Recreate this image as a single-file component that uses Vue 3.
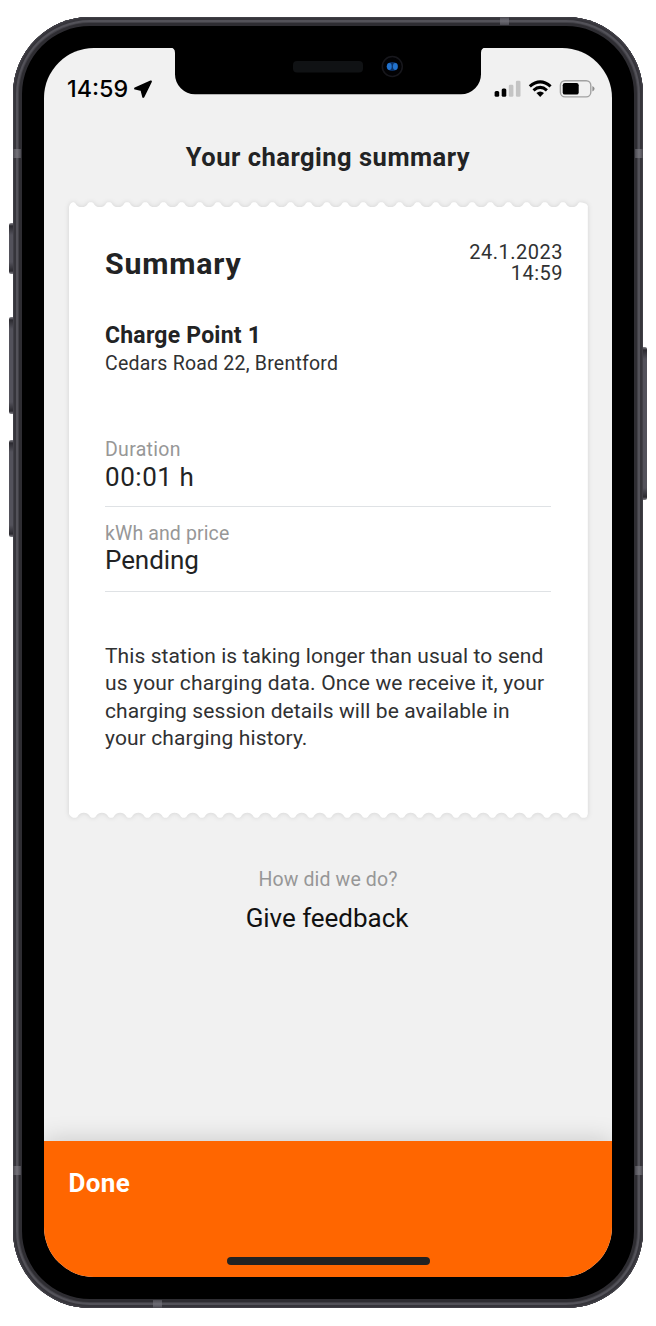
<script setup>
const session = {
  point: 'Charge Point 1',
  address: 'Cedars Road 22, Brentford',
  stamp: '24.1.2023\n14:59',
}
const notice = [
  'This station is taking longer than usual to send',
  'us your charging data. Once we receive it, your',
  'charging session details will be available in',
  'your charging history.',
]

// Ticket outline with 28 scallops cut out of the top and bottom edges
const pitch = 18.16
const count = 28
const w = 518.8
const h = 616
function ticket() {
  const n = (v) => v.toFixed(2)
  let d = 'M0 5Q1 1 4 .3'
  for (let i = 0; i < count; i++) {
    const c = 12.7 + i * pitch
    d += `L${n(c - 7.8)} .3L${n(c - 6.4)} 1.2A7.2 7.2 0 0 0 ${n(c + 6.4)} 1.2L${n(c + 7.8)} .3`
  }
  d += `Q${w - 1} 1 ${w} 4V${h - 4}Q${w - 0.5} ${h - 0.8} ${w - 3} ${h - 0.3}`
  for (let i = count - 1; i >= 0; i--) {
    const c = 14.8 + i * pitch
    d += `L${n(c + 7.8)} ${h - 0.3}L${n(c + 6.4)} ${h - 1.3}A7.2 7.2 0 0 0 ${n(c - 6.4)} ${h - 1.3}L${n(c - 7.8)} ${h - 0.3}`
  }
  return d + `L4 ${h - 0.3}Q1 ${h - 2} 0 ${h - 4}Z`
}
const outline = ticket()
</script>

<template>
  <div class="stage">
    <i class="key key-mute"></i>
    <i class="key key-up"></i>
    <i class="key key-down"></i>
    <i class="key key-power"></i>
    <div class="phone">
      <i class="band band-v l t"></i>
      <i class="band band-v r t"></i>
      <i class="band band-v l b"></i>
      <i class="band band-v r b"></i>
      <i class="band band-h top"></i>
      <i class="band band-h bottom"></i>

      <svg class="notch" width="316" height="48" viewBox="0 0 316 48">
        <path d="M0 0H316V.5Q311 .5 311 6V27A20 20 0 0 1 291 47.2H25A20 20 0 0 1 5 27V6Q5 .5 0 .5Z" fill="#000" />
        <rect x="123" y="14" width="70" height="11.5" rx="4" fill="#101214" />
        <circle cx="222.3" cy="19.5" r="10" fill="#020204" stroke="#17171c" stroke-width="1.5" />
        <ellipse cx="222.3" cy="19.5" rx="5.8" ry="4.6" fill="#0a3065" />
        <ellipse cx="219.3" cy="19.5" rx="2.4" ry="3.4" fill="#2272cc" />
        <ellipse cx="225.3" cy="19.5" rx="2.4" ry="3.4" fill="#2272cc" />
      </svg>

      <div class="screen">
        <div class="status">
          <span class="clock">14:59</span>
          <svg class="arrow" width="20" height="20" viewBox="0 0 20 20">
            <path d="M17.8 2.6 2.2 9.5 8.6 11 10.3 17.8Z" fill="#000" stroke="#000" stroke-width="2.2" stroke-linejoin="round" />
          </svg>
          <svg class="indicators" width="102" height="20" viewBox="0 0 102 20">
            <rect x="0.6" y="12" width="4.6" height="5.8" rx="1.5" />
            <rect x="7.7" y="9.6" width="4.6" height="8.2" rx="1.5" />
            <g fill="#c4c4c4">
              <rect x="14.8" y="5.8" width="4.6" height="12" rx="1.3" />
              <rect x="21.9" y="1.8" width="4.6" height="16" rx="1.3" />
            </g>
            <g fill="none" stroke="#000" stroke-width="3.1">
              <path d="M35.8 7.4Q46.2-1.8 56.6 7.4" />
              <path d="M39.5 11.3Q46.2 5.5 52.9 11.3" />
            </g>
            <path d="M42.4 14.1Q46.2 10.8 50 14.1L46.2 17.9Z" />
            <rect x="66.4" y="1.7" width="30.4" height="16.2" rx="4.6" fill="none" stroke="#a2a2a2" stroke-width="1.4" />
            <rect x="68.7" y="4" width="16" height="11.6" rx="2.2" />
            <path d="M98.4 7.1Q100.6 8 100.6 9.8T98.4 12.5Z" fill="#8d8d8d" />
          </svg>
        </div>

        <h1 class="title">Your charging summary</h1>

        <section class="card">
          <svg class="paper" :width="w" :height="h" :viewBox="`0 0 ${w} ${h}`">
            <path :d="outline" fill="#fff" />
          </svg>
          <header class="head">
            <h2>Summary</h2>
            <p class="stamp">{{ session.stamp }}</p>
          </header>
          <h3>{{ session.point }}</h3>
          <p class="address">{{ session.address }}</p>
          <dl>
            <div class="row first">
              <dt class="dur">Duration</dt>
              <dd class="dur-value">00:01 h</dd>
            </div>
            <div class="row second">
              <dt>kWh and price</dt>
              <dd>Pending</dd>
            </div>
          </dl>
          <p class="notice">
            <span v-for="(line, i) in notice" :key="i" :class="'n' + i">{{ line }}</span>
          </p>
        </section>

        <div class="feedback">
          <span class="ask">How did we do?</span>
          <span class="give">Give feedback</span>
        </div>

        <footer class="done">
          <span>Done</span>
          <i class="home"></i>
        </footer>
      </div>
    </div>
  </div>
</template>

<style>
body { background: #fff; }
</style>

<style scoped>
* { box-sizing: border-box; }
h1, h2, h3, p, dl, dd, dt { margin: 0; font-weight: 400; }
.stage {
  position: relative;
  width: 656px;
  height: 1326px;
  padding: 17px 13px 18px;
  overflow: hidden;
  font-family: Roboto, "Liberation Sans", sans-serif;
  color: #222324;
}
.phone {
  position: relative;
  width: 630px;
  height: 1291px;
  padding: 30.5px 31px 31px;
  border-radius: 77px;
  background: #000;
  box-shadow: inset 0 0 0 1px #403f46, inset 0 0 0 3px #36353b, inset 0 0 0 5px #535259, inset 0 0 0 6px #424147, inset 0 0 0 9px #2e2d32;
}
.key {
  position: absolute;
  width: 5px;
  border-radius: 2px 0 0 2px;
  background: linear-gradient(#85848b 0, #2b2a30 3px, #53525b 12px, #53525b calc(100% - 12px), #2b2a30 calc(100% - 3px), #85848b 100%);
}
.key-mute { left: 9px; top: 223px; height: 51px; }
.key-up { left: 9px; top: 317px; height: 97px; }
.key-down { left: 9px; top: 440px; height: 97px; }
.key-power { left: 642px; top: 347px; height: 153px; border-radius: 0 2px 2px 0; }
.band { position: absolute; }
.band-v { width: 8px; height: 9px; background: linear-gradient(90deg, #4b4a51, #74737a, #4b4a51); }
.band-h { width: 9px; height: 8px; background: linear-gradient(#4b4a51, #6d6c74, #4b4a51); }
.l { left: 0; }
.r { right: 0; }
.t { top: 132px; }
.b { top: 1149px; }
.top { left: 487px; top: 0; }
.bottom { left: 140px; bottom: 0; }
.notch { position: absolute; left: 157px; top: 30px; z-index: 2; }
.screen {
  display: flex;
  flex-direction: column;
  width: 568px;
  height: 1229.4px;
  border-radius: 50px;
  overflow: hidden;
  background: #f1f1f1;
}
.status {
  display: flex;
  align-items: flex-start;
  height: 93px;
  padding: 31.5px 16px 0 23px;
}
.clock {
  width: 66px;
  margin-top: -4px;
  font: 500 23.3px/28px Inter, sans-serif;
  color: #000;
  white-space: nowrap;
}
.indicators { margin-left: auto; }
.title {
  height: 61.5px;
  padding-top: .5px;
  font-size: 25.5px;
  line-height: 32px;
  font-weight: 700;
  letter-spacing: .5px;
  text-align: center;
}
.card {
  position: relative;
  flex: none;
  width: 519px;
  height: 616px;
  margin-left: 25px;
  padding: 39px 25px 0 36px;
}
.paper {
  position: absolute;
  left: 0;
  top: 0;
  overflow: visible;
  filter: drop-shadow(0 0 2.5px rgba(0, 0, 0, .12));
}
.head, .card h3, .card p, dl { position: relative; white-space: nowrap; }
.head { display: flex; justify-content: space-between; height: 81px; }
h2 { padding-top: 5px; font-size: 30.3px; line-height: 36px; font-weight: 700; letter-spacing: .8px; }
.card .stamp { padding-top: .5px; white-space: pre; text-align: right; font-size: 20px; line-height: 21px; letter-spacing: .5px; color: #303132; }
.card h3 { height: 29.5px; font-size: 23px; line-height: 28px; font-weight: 700; letter-spacing: .22px; }
.address { height: 86.5px; font-size: 19.5px; line-height: 24px; letter-spacing: .22px; color: #303132; }
.row { width: 446px; border-bottom: 1.5px solid #dfe2e5; }
.first { height: 69px; }
.second { height: 85px; padding-top: 14.5px; }
dt { font-size: 19.5px; line-height: 23.5px; letter-spacing: .12px; color: #979797; }
.dur { letter-spacing: .3px; }
dd { font-size: 26px; line-height: 30px; letter-spacing: -.08px; }
.dur-value { letter-spacing: .55px; }
.notice { display: flex; flex-direction: column; margin-top: 50.5px; font-size: 21px; line-height: 27.5px; color: #303132; }
.n0 { letter-spacing: .08px; }
.n1 { letter-spacing: .18px; }
.n2 { letter-spacing: .1px; }
.n3 { letter-spacing: .12px; }
.feedback {
  display: flex;
  flex-direction: column;
  align-items: center;
  padding-top: 50px;
}
.ask { height: 35px; font-size: 19.5px; line-height: 24px; letter-spacing: .14px; color: #979797; }
.give { margin-left: -2px; font-size: 26px; line-height: 30px; letter-spacing: -.04px; color: #111; }
.done {
  position: relative;
  display: flex;
  flex-direction: column;
  justify-content: space-between;
  height: 136px;
  margin-top: auto;
  padding: 27px 24.5px 12px;
  background: #ff6600;
  box-shadow: 0 0 24px rgba(0, 0, 0, .18);
  color: #fff;
  font-size: 26px;
  line-height: 30px;
  font-weight: 700;
  letter-spacing: .4px;
}
.home { align-self: center; width: 203px; height: 8px; border-radius: 4px; background: #222; }
</style>
